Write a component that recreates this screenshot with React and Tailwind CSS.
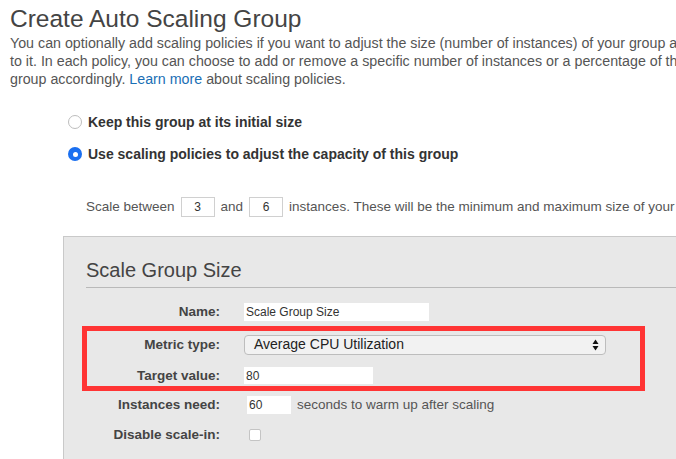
import React from 'react';

function Row({ label, children, labelW = 'w-[134px]' }) {
  return (
    <div className="flex items-center">
      <div className={`${labelW} shrink-0 text-right text-[13.5px] font-bold text-[#444]`}>{label}</div>
      <div className="ml-[24px] flex items-center">{children}</div>
    </div>
  );
}

function Radio({ checked }) {
  if (checked) {
    return (
      <span className="flex h-[14px] w-[14px] items-center justify-center rounded-full bg-[#1a6ff0]">
        <span className="h-[5px] w-[5px] rounded-full bg-white" />
      </span>
    );
  }
  return <span className="h-[14px] w-[14px] rounded-full border border-[#bdbdbd] bg-white" />;
}

export default function App() {
  return (
    <div className="h-[459px] w-[676px] overflow-hidden bg-white text-[#555]" style={{ fontFamily: '"Liberation Sans", Arial, sans-serif' }}>
      <div className="w-[800px]">
        <h1 className="pl-[10px] pt-[4px] text-[24.5px] leading-[30px] text-[#444]">Create Auto Scaling Group</h1>
        <div className="pl-[10px] text-[14.25px] leading-[18px] whitespace-nowrap">
          <div>You can optionally add scaling policies if you want to adjust the size (number of instances) of your group and</div>
          <div>to it. In each policy, you can choose to add or remove a specific number of instances or a percentage of the</div>
          <div>
            group accordingly. <span className="text-[#1a6fb5]">Learn more</span> about scaling policies.
          </div>
        </div>

        <div className="ml-[68px] mt-[25px] flex flex-col gap-[14px]">
          <label className="flex items-center gap-[6px]">
            <Radio />
            <span className="text-[14px] leading-[18px] font-bold text-[#333]">Keep this group at its initial size</span>
          </label>
          <label className="flex items-center gap-[6px]">
            <Radio checked />
            <span className="text-[14px] leading-[18px] font-bold text-[#333]">Use scaling policies to adjust the capacity of this group</span>
          </label>
        </div>

        <div className="ml-[86px] mt-[34px] flex items-center whitespace-nowrap text-[13.5px]">
          <span>Scale between</span>
          <span className="mx-[6px] flex h-[20px] w-[34px] items-center justify-center border border-[#d0d0d0] text-[12px] text-[#333]">3</span>
          <span>and</span>
          <span className="mx-[6px] flex h-[20px] w-[34px] items-center justify-center border border-[#d0d0d0] text-[12px] text-[#333]">6</span>
          <span>instances. These will be the minimum and maximum size of your group.</span>
        </div>

        <div className="ml-[63px] mt-[19px] h-[300px] border border-[#c9c9c9] bg-[#e8e8e8] pl-[22px] pt-[21px]">
          <div className="border-b border-[#b9b9b9] pb-[5px] text-[20px] leading-[24px] text-[#444]">Scale Group Size</div>

          <div className="mt-[14px]">
            <Row label="Name:">
              <div className="flex h-[18px] w-[185px] items-center bg-white px-[2px] text-[12px] text-[#333]">Scale Group Size</div>
            </Row>
          </div>

          <div className="ml-[-4px] mt-[3px] w-[563px] border-[5px] border-[#ff3434] pt-[4px]">
            <Row label="Metric type:" labelW="w-[133px]">
              <div className="flex h-[20px] w-[362px] items-center justify-between rounded-[4px] border border-[#bdbdbd] bg-[#f2f2f2] pl-[9px] pr-[6px] text-[14px] text-[#222]">
                <span>Average CPU Utilization</span>
                <svg width="7" height="12" viewBox="0 0 7 12">
                  <path d="M3.5 0.5 L6.5 5 L0.5 5 Z" fill="#111" />
                  <path d="M3.5 11.5 L6.5 7 L0.5 7 Z" fill="#111" />
                </svg>
              </div>
            </Row>
            <div className="mt-[11px]">
              <Row label="Target value:" labelW="w-[133px]">
                <div className="flex h-[17px] w-[129px] items-center bg-white px-[2px] text-[12px] text-[#333]">80</div>
              </Row>
            </div>
          </div>

          <div className="mt-[4px]">
            <Row label="Instances need:">
              <div className="ml-[3px] flex h-[18px] w-[44px] items-center bg-white px-[2px] text-[12px] text-[#333]">60</div>
              <span className="ml-[6px] whitespace-nowrap text-[13.5px]">seconds to warm up after scaling</span>
            </Row>
          </div>

          <div className="mt-[10px]">
            <Row label="Disable scale-in:">
              <span className="ml-[5px] h-[12px] w-[12px] rounded-[2px] border border-[#c4c4c4] bg-white" />
            </Row>
          </div>
        </div>
      </div>
    </div>
  );
}
